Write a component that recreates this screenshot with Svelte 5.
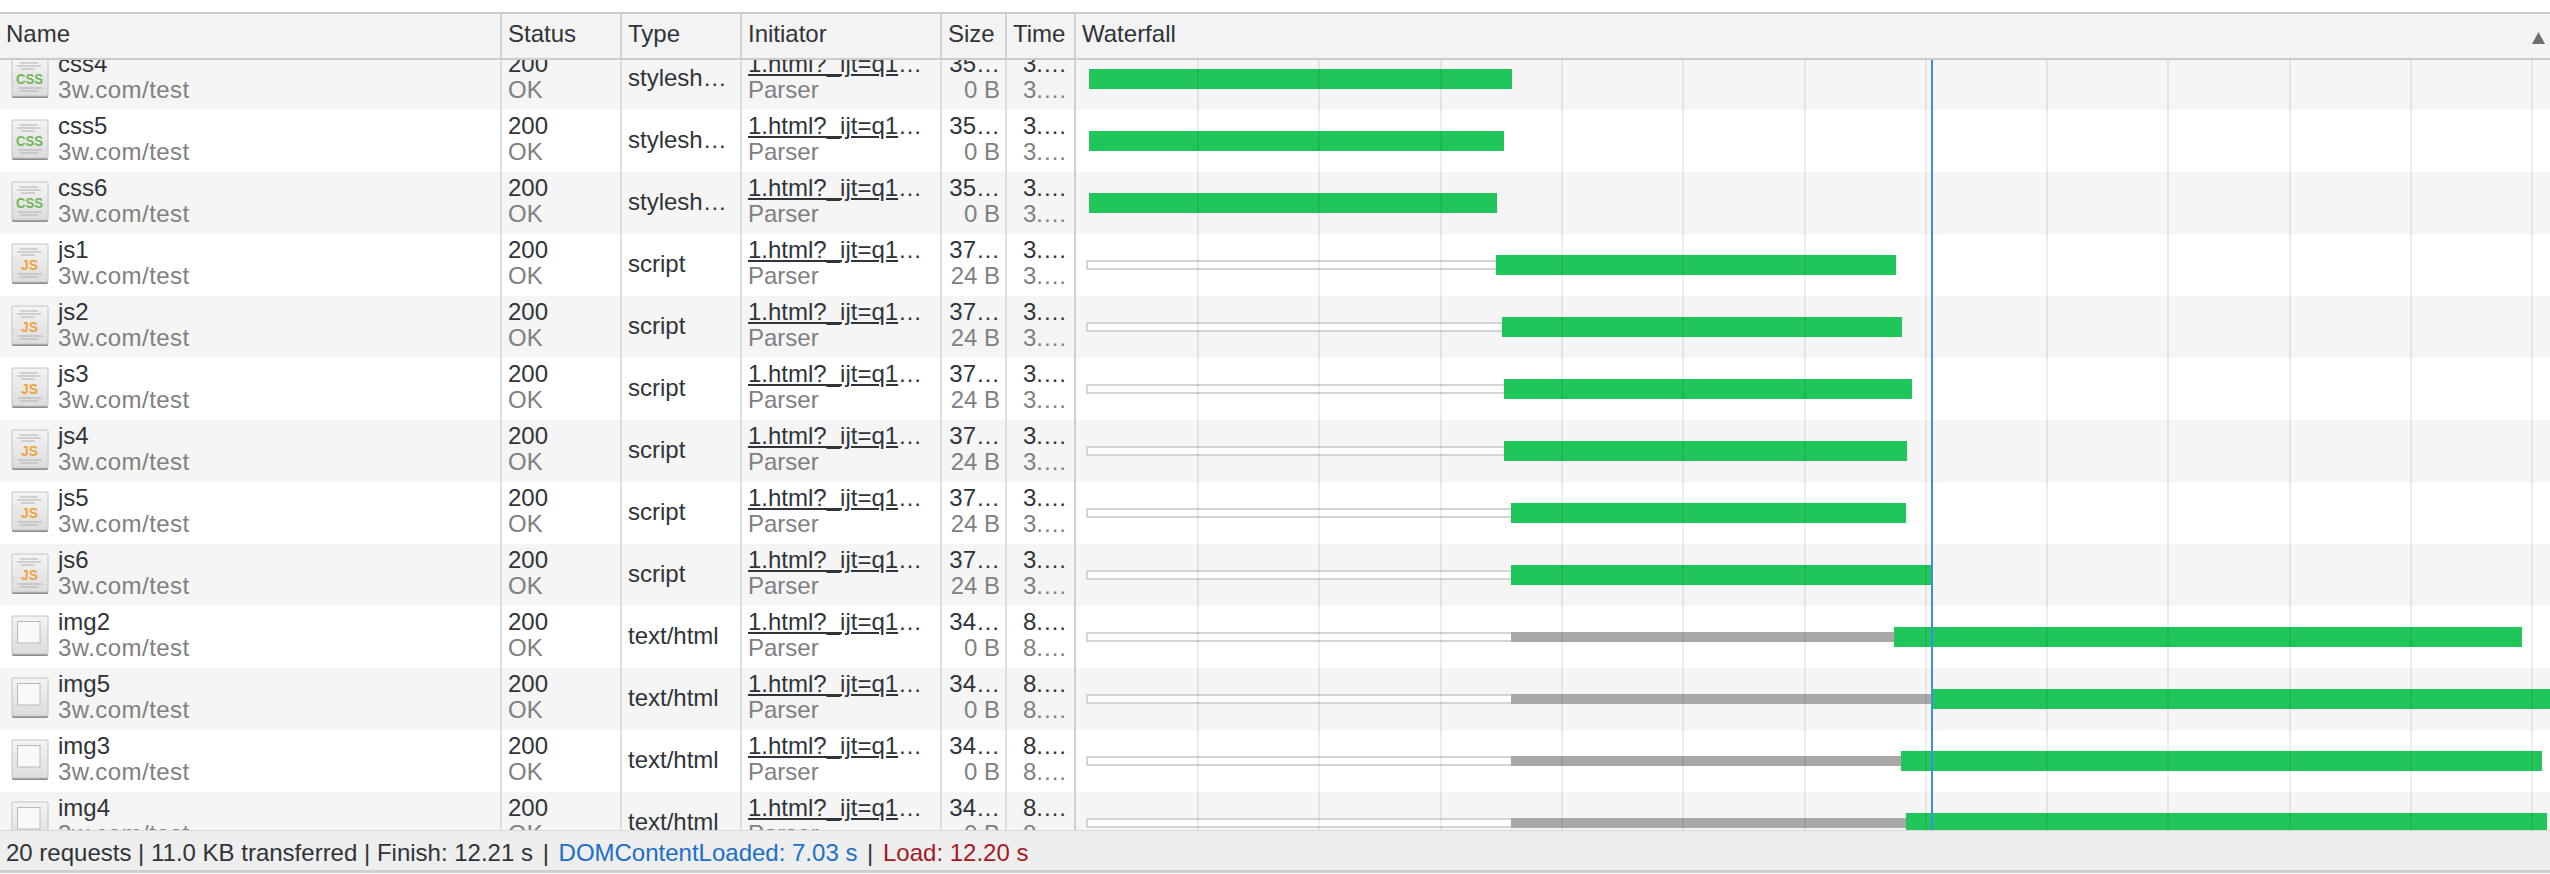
<script>
  const WATERFALL_LEFT = 1076;
  const gridLines = Array.from({ length: 12 }, (_, i) => Math.round(1197 + i * 121.3) - WATERFALL_LEFT);

  // wait: start of the hollow bar, queue: start of the grey bar, start/end: green bar
  const rows = [
    { name: 'css4', kind: 'css', type: 'stylesh…', size: '35…', transferred: '0 B', time: '3.…', start: 1089, end: 1512 },
    { name: 'css5', kind: 'css', type: 'stylesh…', size: '35…', transferred: '0 B', time: '3.…', start: 1089, end: 1504 },
    { name: 'css6', kind: 'css', type: 'stylesh…', size: '35…', transferred: '0 B', time: '3.…', start: 1089, end: 1497 },
    { name: 'js1', kind: 'js', type: 'script', size: '37…', transferred: '24 B', time: '3.…', wait: 1086, start: 1496, end: 1896 },
    { name: 'js2', kind: 'js', type: 'script', size: '37…', transferred: '24 B', time: '3.…', wait: 1086, start: 1502, end: 1902 },
    { name: 'js3', kind: 'js', type: 'script', size: '37…', transferred: '24 B', time: '3.…', wait: 1086, start: 1504, end: 1912 },
    { name: 'js4', kind: 'js', type: 'script', size: '37…', transferred: '24 B', time: '3.…', wait: 1086, start: 1504, end: 1907 },
    { name: 'js5', kind: 'js', type: 'script', size: '37…', transferred: '24 B', time: '3.…', wait: 1086, start: 1511, end: 1906 },
    { name: 'js6', kind: 'js', type: 'script', size: '37…', transferred: '24 B', time: '3.…', wait: 1086, start: 1511, end: 1932 },
    { name: 'img2', kind: 'img', type: 'text/html', size: '34…', transferred: '0 B', time: '8.…', wait: 1086, queue: 1511, start: 1894, end: 2522 },
    { name: 'img5', kind: 'img', type: 'text/html', size: '34…', transferred: '0 B', time: '8.…', wait: 1086, queue: 1511, start: 1931, end: 2560 },
    { name: 'img3', kind: 'img', type: 'text/html', size: '34…', transferred: '0 B', time: '8.…', wait: 1086, queue: 1511, start: 1901, end: 2542 },
    { name: 'img4', kind: 'img', type: 'text/html', size: '34…', transferred: '0 B', time: '8.…', wait: 1086, queue: 1511, start: 1906, end: 2547 }
  ];

  const px = (from, to) => `left:${from - WATERFALL_LEFT}px;width:${to - from}px`;
</script>

<div class="network">
  <div class="head">
    <div class="cell">Name</div>
    <div class="cell">Status</div>
    <div class="cell">Type</div>
    <div class="cell">Initiator</div>
    <div class="cell">Size</div>
    <div class="cell">Time</div>
    <div class="cell waterfall-head">
      <span>Waterfall</span>
      <svg class="sort" width="13" height="12" viewBox="0 0 13 12"><path d="M6.5 0 13 12H0z" fill="#6e6e6e" /></svg>
    </div>
  </div>

  <div class="body">
    <div class="list">
      {#each rows as row}
        <div class="row">
          <div class="cell name-cell">
            <svg class="file" width="38" height="42" viewBox="0 0 38 42">
              <defs>
                <linearGradient id="page" x1="0" y1="0" x2="0" y2="1">
                  <stop offset="0" stop-color="#f4f4f4" />
                  <stop offset="1" stop-color="#dcdcdc" />
                </linearGradient>
              </defs>
              <rect x="1" y="1" width="36" height="40" rx="1.5" fill="#8c8c8c" />
              <rect x="1" y="1" width="36" height="38" rx="1" fill="url(#page)" stroke="#c4c4c4" />
              {#if row.kind === 'img'}
                <rect x="6.5" y="6.5" width="22.5" height="21.5" fill="#f9f9f9" stroke="#b9b9b9" />
              {:else}
                <path d="M9 6h18M6 9h24M10 12h14M7 31h24M9 34h18" stroke="#b0b0b0" stroke-width="1" />
                <text
                  class={row.kind}
                  x="18.5"
                  y="27"
                  text-anchor="middle"
                  textLength={row.kind === 'css' ? 27 : 17}
                  lengthAdjust="spacingAndGlyphs">{row.kind.toUpperCase()}</text>
              {/if}
            </svg>
            <div class="lines">
              <span>{row.name}</span>
              <span class="muted host">3w.com/test</span>
            </div>
          </div>
          <div class="cell lines">
            <span>200</span>
            <span class="muted">OK</span>
          </div>
          <div class="cell single">{row.type}</div>
          <div class="cell lines">
            <span><span class="link">1.html?_ijt=q1</span>…</span>
            <span class="muted">Parser</span>
          </div>
          <div class="cell lines right">
            <span>{row.size}</span>
            <span class="muted">{row.transferred}</span>
          </div>
          <div class="cell lines time">
            <span>{row.time}</span>
            <span class="muted">{row.time}</span>
          </div>
          <div class="cell timeline">
            {#if row.wait}
              <div class="bar waiting" style={px(row.wait, row.queue ?? row.start)}></div>
            {/if}
            {#if row.queue}
              <div class="bar queued" style={px(row.queue, row.start)}></div>
            {/if}
            <div class="bar receiving" style={px(row.start, row.end)}></div>
          </div>
        </div>
      {/each}
    </div>

    <div class="overlay">
      {#each gridLines as left}
        <div class="divider" style="left:{left}px"></div>
      {/each}
      <div class="dom-line"></div>
    </div>
  </div>

  <div class="summary">
    20 requests | 11.0 KB transferred | Finish: 12.21 s
    <span class="sep">|</span>
    <span class="dom">DOMContentLoaded: 7.03 s</span>
    <span class="sep">|</span>
    <span class="load">Load: 12.20 s</span>
  </div>
</div>

<style>
  :global(body) {
    background: #fff;
  }

  .network {
    padding-top: 12px;
    font-family: "Liberation Sans", Arial, sans-serif;
    font-size: 24px;
    color: #303438;
  }

  .head,
  .row {
    display: grid;
    grid-template-columns: 502px 120px 120px 200px 65px 69px 1fr;
  }

  .head {
    height: 48px;
    box-sizing: border-box;
    border-top: 2px solid #cbcbcb;
    border-bottom: 2px solid #cbcbcb;
    background: #f3f3f3;
  }

  .head .cell {
    display: flex;
    align-items: center;
    padding: 0 5px 4px 6px;
    border-right: 2px solid #d2d2d2;
  }

  .head .cell:last-child {
    border-right: 0;
  }

  .waterfall-head {
    justify-content: space-between;
    padding-right: 5px !important;
  }

  .sort {
    margin-top: 8px;
  }

  .body {
    position: relative;
    height: 770px;
    overflow: hidden;
  }

  .list {
    margin-top: -12px;
  }

  .row {
    height: 62px;
    background: #fff;
  }

  .row:nth-child(odd) {
    background: #f5f5f5;
  }

  .cell {
    box-sizing: border-box;
    min-width: 0;
    padding: 0 5px 0 6px;
    border-right: 2px solid #dedede;
    white-space: nowrap;
  }

  .name-cell {
    display: flex;
    align-items: flex-start;
    gap: 9px;
    padding-left: 11px;
  }

  .file {
    margin-top: 9px;
    flex: none;
  }

  .file text {
    font-size: 15px;
    font-weight: 700;
  }

  .file .css {
    fill: #72b85a;
  }

  .file .js {
    fill: #efa43c;
  }

  .lines {
    display: flex;
    flex-direction: column;
    padding-top: 3px;
    line-height: 26px;
  }

  .muted {
    color: #808080;
  }

  .host {
    letter-spacing: 0.45px;
  }

  .link {
    text-decoration: underline;
  }

  .single {
    align-self: stretch;
    line-height: 60px;
  }

  .right {
    align-items: flex-end;
  }

  .time {
    align-items: flex-end;
    padding-right: 7px;
    border-right-color: #cfcfcf;
  }

  .timeline {
    position: relative;
    padding: 0;
    border-right: 0;
  }

  .bar {
    position: absolute;
    top: 50%;
    box-sizing: border-box;
  }

  .waiting {
    height: 10px;
    margin-top: -5px;
    background: #fff;
    border: 2px solid #d4d4d4;
    border-right: 0;
  }

  .queued {
    height: 10px;
    margin-top: -5px;
    background: #a8a8a8;
  }

  .receiving {
    height: 20px;
    margin-top: -10px;
    background: #21c65b;
  }

  .overlay {
    position: absolute;
    inset: 0 0 0 1076px;
    pointer-events: none;
  }

  .divider {
    position: absolute;
    top: 0;
    bottom: 0;
    width: 2px;
    background: rgba(0, 0, 0, 0.07);
  }

  .dom-line {
    position: absolute;
    top: 0;
    bottom: 0;
    left: 855px;
    width: 2px;
    background: #3a8fe0;
  }

  .summary {
    height: 43px;
    box-sizing: border-box;
    padding: 9px 6px 0;
    line-height: 26px;
    background: #eee;
    border-top: 1px solid #d8d8d8;
    border-bottom: 3px solid #cfcfcf;
    white-space: nowrap;
  }

  .sep {
    margin: 0 3px;
  }

  .dom {
    color: #1a6fc9;
  }

  .load {
    color: #a8161f;
  }
</style>
